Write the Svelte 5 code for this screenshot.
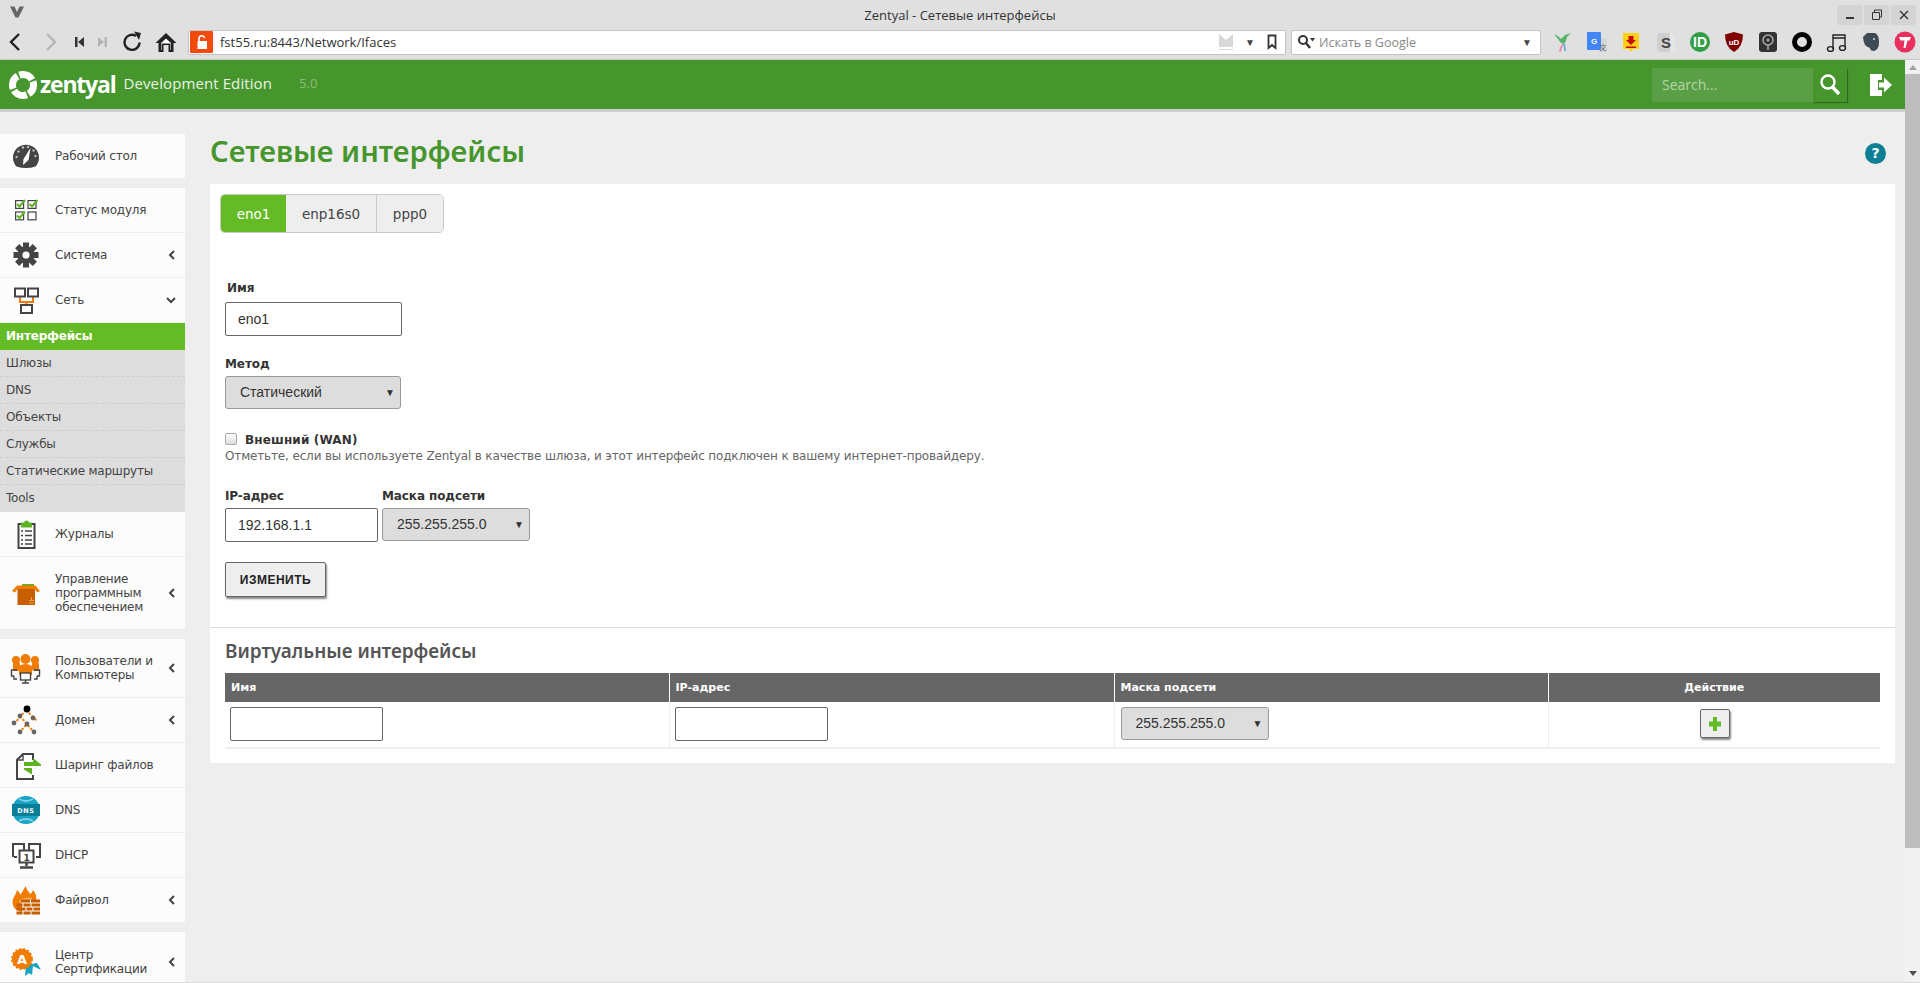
<script>
  const exts = ['bird', 'gt', 'dl', 's', 'id', 'ub', 'tor', 'ring', 'music', 'ever', 'pink'];

  const sub = ['Интерфейсы', 'Шлюзы', 'DNS', 'Объекты', 'Службы', 'Статические маршруты', 'Tools'];

  const groups = [
    [{ icon: 'dash', label: 'Рабочий стол' }],
    [
      { icon: 'status', label: 'Статус модуля' },
      { icon: 'gear', label: 'Система', arrow: 'left' },
      { icon: 'net', label: 'Сеть', arrow: 'down', children: sub },
      { icon: 'log', label: 'Журналы' },
      { icon: 'box', label: 'Управление программным обеспечением', arrow: 'left', tall: true }
    ],
    [
      { icon: 'users', label: 'Пользователи и Компьютеры', arrow: 'left', mid: true },
      { icon: 'domain', label: 'Домен', arrow: 'left' },
      { icon: 'share', label: 'Шаринг файлов' },
      { icon: 'dns', label: 'DNS' },
      { icon: 'dhcp', label: 'DHCP' },
      { icon: 'fire', label: 'Файрвол', arrow: 'left' }
    ],
    [{ icon: 'ca', label: 'Центр Сертификации', arrow: 'left', mid: true }]
  ];
</script>

{#snippet navIcon(name)}
  <svg class="nav-icon" viewBox="0 0 32 32" width="32" height="32">
    {#if name === 'dash'}
      <path d="M6.5 26.5 A13 13 0 1 1 25.5 26.5 Q16 29.5 6.5 26.5Z" fill="#444" />
      <path d="M20.5 8 L18.5 20 L13 25 L13.5 19Z" fill="#fff" />
      <g fill="#bbb"><circle cx="6.5" cy="17" r="1.2" /><circle cx="8.5" cy="11.5" r="1.2" /><circle cx="13" cy="7.5" r="1.2" /><circle cx="18" cy="7" r="1.2" /><circle cx="23.5" cy="10.5" r="1.2" /><circle cx="25.5" cy="16" r="1.2" /></g>
    {:else if name === 'status'}
      <g fill="none" stroke="#444" stroke-width="1.2">
        <rect x="5.6" y="6.6" width="8" height="7.8" /><rect x="18" y="6.6" width="8" height="7.8" />
        <rect x="5.6" y="18" width="8" height="7.8" /><rect x="18" y="18" width="8" height="7.8" />
      </g>
      <g fill="none" stroke="#5fb221" stroke-width="2">
        <path d="M7 10 L9.5 12.5 L15 6" /><path d="M19.5 10 L22 12.5 L27.5 6" /><path d="M7 21.5 L9.5 24 L15 17.5" />
      </g>
    {:else if name === 'gear'}
      <g fill="#444">
        <circle cx="16" cy="16" r="8.5" />
        <rect x="13" y="3.5" width="6" height="25" />
        <rect x="13" y="3.5" width="6" height="25" transform="rotate(45 16 16)" />
        <rect x="13" y="3.5" width="6" height="25" transform="rotate(90 16 16)" />
        <rect x="13" y="3.5" width="6" height="25" transform="rotate(135 16 16)" />
      </g>
      <circle cx="16" cy="16" r="3.6" fill="#fcfcfc" />
    {:else if name === 'net'}
      <path d="M10 13 V18 H23 V13 M16.5 18 V21" fill="none" stroke="#f07b05" stroke-width="2" />
      <g fill="#fff" stroke="#444" stroke-width="2">
        <rect x="5" y="4.5" width="10" height="8" /><rect x="18" y="4.5" width="10" height="8" /><rect x="11" y="21" width="11" height="8" />
      </g>
    {:else if name === 'log'}
      <path d="M8.5 6 H24.5 V30 H8.5Z" fill="none" stroke="#444" stroke-width="2" />
      <path d="M11 4.5 H14 A2.6 2.6 0 0 1 19 4.5 H22 V9.5 H11Z" fill="#5fb221" />
      <g stroke="#444" stroke-width="1.6">
        <path d="M11 13 h2 M15 13 h7 M11 17.5 h2 M15 17.5 h7 M11 22 h2 M15 22 h7 M11 26 h2 M15 26 h7" />
      </g>
    {:else if name === 'box'}
      <path d="M7.5 12 H25 V28 H7.5Z" fill="#c75e00" />
      <path d="M12 7 H24 V12 H12Z" fill="#5fb221" />
      <path d="M2 14 L7 8.5 H25.5 L30 14 L27 15.5 L25 12 H7.5 L5 15.5Z" fill="#f07b05" />
      <path d="M19 23.5 h5 M21.5 20 v3 M19 26 h5" stroke="#f0a050" stroke-width="1" />
    {:else if name === 'users'}
      <g fill="#f07b05">
        <circle cx="6" cy="8" r="4" /><rect x="3" y="10" width="7" height="9" rx="2" />
        <circle cx="25" cy="8" r="4" /><rect x="22" y="10" width="7" height="9" rx="2" />
        <circle cx="15.5" cy="7" r="5" /><path d="M9 14 Q15.5 10 22 14 V23 H9Z" />
      </g>
      <g fill="none" stroke="#444" stroke-width="1.4">
        <path d="M7 18 H1.5 V24 H4 M4 24 V27 H7" /><path d="M24 18 H29.5 V24 H27 M27 24 V27 H24" />
        <rect x="10.5" y="21" width="10" height="7" fill="#fff" /><path d="M15.5 28 V31 M12 31 H19" />
      </g>
    {:else if name === 'domain'}
      <g stroke="#f07b05" stroke-width="2" stroke-dasharray="2.5 1.5" fill="none">
        <path d="M16 6 L5 19 M16 6 L27 17 M10 12 L22 26 M16 21 L10 28" />
      </g>
      <circle cx="17" cy="5" r="3.4" fill="#000" />
      <g fill="#666">
        <circle cx="10" cy="12" r="2.4" /><circle cx="23" cy="14" r="2.4" /><circle cx="4" cy="19" r="2.4" />
        <circle cx="17" cy="20" r="2.4" /><circle cx="10" cy="28" r="2.4" /><circle cx="24" cy="28" r="2.4" />
      </g>
    {:else if name === 'share'}
      <path d="M23 11 V5 H13 L7 11 V30 H23 V26" fill="none" stroke="#444" stroke-width="2" />
      <path d="M7 11 H13 V5" fill="none" stroke="#444" stroke-width="1.4" />
      <path d="M14 13 H23 V9 L31 15.5 V17 H14Z" fill="#5fb221" />
      <path d="M31 19 H22 V25.5 L14 20.5 V19Z" fill="#5fb221" />
    {:else if name === 'dns'}
      <circle cx="16" cy="16" r="14" fill="#16a3c4" />
      <rect x="2" y="10" width="28" height="12" fill="#097e99" />
      <path d="M9 5 Q16 9 23 5 M9 27 Q16 23 23 27" stroke="#7fd0e2" stroke-width="2" fill="none" />
      <text x="16" y="19" class="dns-text">DNS</text>
    {:else if name === 'dhcp'}
      <g fill="#fff" stroke="#444" stroke-width="2">
        <path d="M3 18 V5 H14 V12 M19 12 V5 H30 V18 H26" />
        <rect x="9.5" y="11.5" width="14" height="12" />
      </g>
      <path d="M4 18 h3 M26 18 h3" stroke="#444" stroke-width="2" />
      <path d="M16.5 23.5 V27 M10 28.5 H23" stroke="#444" stroke-width="2.4" />
      <text x="16.5" y="21.5" class="dhcp-text">1</text>
    {:else if name === 'fire'}
      <path d="M3 21 C1 14 6 12 7 6 C9 8 10 9 10 11 C13 8 13 5 16 2 C16 6 19 7 20 10 C22 9 22 8 23 6 C26 10 27 13 26 16 H12 V28 C8 27 4 25 3 21Z" fill="#f07b05" />
      <path d="M9 17 C12 14 16 13 22 14 V16 H12 V22 Z" fill="#f9b26a" />
      <g fill="#c75e00">
        <rect x="11" y="15.5" width="9" height="3" /><rect x="21" y="15.5" width="9" height="3" />
        <rect x="6.5" y="19.5" width="6" height="3" /><rect x="13.5" y="19.5" width="7" height="3" /><rect x="21.5" y="19.5" width="8.5" height="3" />
        <rect x="6.5" y="23.5" width="9" height="3" /><rect x="16.5" y="23.5" width="6" height="3" /><rect x="23.5" y="23.5" width="6.5" height="3" />
        <rect x="6.5" y="27.5" width="6" height="3" /><rect x="13.5" y="27.5" width="7" height="3" /><rect x="21.5" y="27.5" width="8.5" height="3" />
      </g>
    {:else if name === 'ca'}
      <path d="M16 19 L15 30 L19 27 L22 29 L23 20 L31 24 L27 17Z" fill="#16a3c4" />
      <circle cx="12" cy="13" r="10" fill="#f07b05" stroke="#f07b05" stroke-width="2" stroke-dasharray="2 2" />
      <circle cx="12" cy="13" r="9.5" fill="#f07b05" />
      <text x="12" y="17.5" class="ca-text">A</text>
    {/if}
  </svg>
{/snippet}

{#snippet ext(name)}
  <svg class="ext" viewBox="0 0 24 24" width="24" height="24">
    {#if name === 'bird'}
      <path d="M3 4 Q8 6 10 9 L14 5 L20 3 L16 7 Q15 12 13 14 L10 13 Q7 9 3 4Z" fill="#58b36b" />
      <path d="M12 14 Q9 18 9 22" stroke="#e58aa8" stroke-width="1.6" fill="none" />
      <path d="M13 14 Q14 17 14 21" stroke="#5aa9dd" stroke-width="1.6" fill="none" />
    {:else if name === 'gt'}
      <path d="M11 8 H22 V22 H14Z" fill="#d5d5d5" />
      <rect x="2" y="2" width="14" height="18" rx="1" fill="#4285f4" />
      <text x="9" y="14" class="gt-text">G</text>
      <text x="18" y="20" class="gt-text2">文</text>
    {:else if name === 'dl'}
      <path d="M4 3 H20 V19 H14 L12 22 L10 19 H4Z" fill="#fbd015" />
      <path d="M9.5 6 H14.5 V10 H17 L12 15 L7 10 H9.5Z M7 16.5 H17 V18 H7Z" fill="#c60c0c" />
    {:else if name === 's'}
      <rect x="3" y="3" width="18" height="19" rx="4" fill="#cfcfcf" />
      <path d="M16 3 H17 Q21 3 21 7 V18 Q21 22 17 22 H16Z" fill="#e6e6e6" />
      <text x="12" y="18" class="s-text">S</text>
    {:else if name === 'id'}
      <circle cx="12" cy="12" r="10" fill="#2f9e44" />
      <text x="12" y="17" class="id-text">ID</text>
    {:else if name === 'ub'}
      <path d="M12 2 L21 4.5 Q21 17 12 22 Q3 17 3 4.5Z" fill="#800000" />
      <text x="12" y="15" class="ub-text">uD</text>
    {:else if name === 'tor'}
      <rect x="3" y="2" width="18" height="20" rx="3" fill="#333" />
      <circle cx="12" cy="10" r="5" fill="none" stroke="#aaa" stroke-width="1.5" />
      <path d="M12 15 V20" stroke="#aaa" stroke-width="1.5" /><circle cx="12" cy="10" r="1.5" fill="#aaa" />
    {:else if name === 'ring'}
      <circle cx="12" cy="12" r="7.5" fill="none" stroke="#000" stroke-width="5" />
    {:else if name === 'music'}
      <path d="M8 19 V5 H20 V17 M8 8 H20" fill="none" stroke="#222" stroke-width="1.4" />
      <ellipse cx="5.5" cy="19" rx="3" ry="2.4" fill="none" stroke="#222" stroke-width="1.4" />
      <ellipse cx="17.5" cy="18" rx="3" ry="2.4" fill="none" stroke="#222" stroke-width="1.4" />
    {:else if name === 'ever'}
      <path d="M8 3 H16 Q20 5 20 12 Q20 20 15 21 Q11 21 11 18 Q8 17 6 15 Q4 10 4 7Z" fill="#3c4b55" />
      <circle cx="15" cy="9" r="1" fill="#ddd" />
    {:else if name === 'pink'}
      <circle cx="12" cy="12" r="10.5" fill="#e8305f" />
      <path d="M6 7 H18 L16.5 10.5 H14.5 L12.5 18 H10.5 L11.5 10.5 H7.5Z" fill="#fff" />
    {/if}
  </svg>
{/snippet}

<div class="window">
  <div class="titlebar">
    <svg class="vivaldi" viewBox="0 0 16 14" width="16" height="14">
      <path d="M1 1.5 H5.5 L8 7 L10.5 1.5 H15 L9.5 12.5 H6.5Z" fill="#666" />
    </svg>
    <span class="title">Zentyal - Сетевые интерфейсы</span>
    <div class="winbtns">
      <span class="winbtn"><i class="min"></i></span>
      <span class="winbtn">
        <svg viewBox="0 0 12 12" width="12" height="12"><path d="M3.5 3 V1 H10.5 V8 H8.5 M1.5 3.5 H8.5 V10.5 H1.5Z" fill="none" stroke="#333" /></svg>
      </span>
      <span class="winbtn">
        <svg viewBox="0 0 12 12" width="12" height="12"><path d="M2 2 L10 10 M10 2 L2 10" stroke="#333" stroke-width="1.4" /></svg>
      </span>
    </div>
  </div>

  <div class="toolbar">
    <div class="navbtns">
      <svg viewBox="0 0 24 24" width="24" height="24"><path d="M15 4 L7 12 L15 20" fill="none" stroke="#222" stroke-width="2.4" /></svg>
      <svg viewBox="0 0 24 24" width="24" height="24"><path d="M9 4 L17 12 L9 20" fill="none" stroke="#b5b5b5" stroke-width="2.4" /></svg>
      <svg class="small" viewBox="0 0 12 14" width="12" height="14"><path d="M2 2 H4.5 V12 H2Z M11 2 V12 L5 7Z" fill="#333" /></svg>
      <svg class="small" viewBox="0 0 12 14" width="12" height="14"><path d="M10 2 H7.5 V12 H10Z M1 2 V12 L7 7Z" fill="#b5b5b5" /></svg>
      <svg viewBox="0 0 24 24" width="24" height="24"><path d="M19.5 12.5 A7.5 7.5 0 1 1 16 6" fill="none" stroke="#222" stroke-width="2.4" /><path d="M14 1.5 L21 3 L19 10Z" fill="#222" /></svg>
      <svg viewBox="0 0 24 24" width="24" height="24"><path d="M1.5 13 L12 3 L22.5 13 H19.5 V22 H14.5 V15 H9.5 V22 H4.5 V13Z" fill="#222" /><path d="M7 13 L12 8.5 L17 13 V20 H16.5 V13.5 H7.5 V20 H7Z" fill="#fff" /></svg>
    </div>
    <div class="urlbar">
      <span class="lock">
        <svg viewBox="0 0 14 16" width="14" height="16"><path d="M2.5 7 H12 V15 H2.5Z" fill="#fff" /><path d="M4 7 V4 A2.8 2.8 0 0 1 9.5 4" fill="none" stroke="#fff" stroke-width="1.6" /></svg>
      </span>
      <span class="url">fst55.ru:8443/Network/Ifaces</span>
      <svg class="gm" viewBox="0 0 14 18" width="14" height="18"><path d="M0 1 L7 7 L14 1 V14 H0Z" fill="#d8d8d8" /><path d="M0 16.5 H14" stroke="#d8d8d8" /></svg>
      <span class="drop">▼</span>
      <svg class="bm" viewBox="0 0 10 16" width="10" height="16"><path d="M1.5 1.5 H8.5 V14 L5 11 L1.5 14Z" fill="none" stroke="#333" stroke-width="1.8" /></svg>
    </div>
    <div class="searchbar">
      <svg viewBox="0 0 18 16" width="18" height="16"><circle cx="6" cy="6" r="4" fill="none" stroke="#333" stroke-width="2" /><path d="M9 9 L13 14" stroke="#333" stroke-width="2.4" /><path d="M13 4 H18 L15.5 7.5Z" fill="#333" /></svg>
      <span class="ph">Искать в Google</span>
      <span class="drop">▼</span>
    </div>
    <div class="exts">
      {#each exts as e}
        {@render ext(e)}
      {/each}
    </div>
  </div>

  <div class="viewport">
    <div class="page">
      <header class="topbar">
        <div class="brand">
          <svg class="ring" viewBox="0 0 28 30" width="28" height="30">
            <circle cx="14" cy="15" r="10.5" fill="none" stroke="#fff" stroke-width="7" stroke-dasharray="14.5 2" stroke-dashoffset="4" />
          </svg>
          <span class="logo">zentyal</span>
          <span class="edition">Development Edition</span>
          <span class="version">5.0</span>
        </div>
        <div class="top-right">
          <div class="top-search">
            <span class="top-ph">Search...</span>
            <button class="top-go" aria-label="Search">
              <svg viewBox="0 0 22 24" width="22" height="24"><circle cx="9" cy="9" r="6.5" fill="none" stroke="#fff" stroke-width="2.4" /><path d="M13.5 14 L20 21" stroke="#fff" stroke-width="3.4" /></svg>
            </button>
          </div>
          <svg class="logout" viewBox="0 0 22 24" width="22" height="24">
            <path d="M0 1 H12 V7 H8 V17 H12 V23 H0Z" fill="#fff" /><path d="M3.5 4 V20 H5 V4Z" fill="#fff" />
            <path d="M9 9.5 H14 V4.5 L22 12 L14 19.5 V14.5 H9Z" fill="#fff" />
          </svg>
        </div>
      </header>

      <div class="body">
        <nav class="sidebar">
          {#each groups as group}
            <ul class="group">
              {#each group as item}
                <li class="item" class:tall={item.tall} class:mid={item.mid}>
                  <span class="icon-cell">{@render navIcon(item.icon)}</span>
                  <span class="label">{item.label}</span>
                  {#if item.arrow === 'left'}
                    <svg class="arrow" viewBox="0 0 8 10" width="8" height="10"><path d="M6 1 L2 5 L6 9" fill="none" stroke="#444" stroke-width="2" /></svg>
                  {:else if item.arrow === 'down'}
                    <svg class="arrow" viewBox="0 0 10 8" width="10" height="8"><path d="M1 2 L5 6 L9 2" fill="none" stroke="#444" stroke-width="2" /></svg>
                  {/if}
                </li>
                {#if item.children}
                  <ul class="sub">
                    {#each item.children as child, i}
                      <li class:active={i === 0}>{child}</li>
                    {/each}
                  </ul>
                {/if}
              {/each}
            </ul>
          {/each}
        </nav>

        <main class="main">
          <div class="heading">
            <h1>Сетевые интерфейсы</h1>
            <span class="help">?</span>
          </div>

          <section class="panel">
            <div class="tabs">
              <span class="tab on">eno1</span>
              <span class="tab">enp16s0</span>
              <span class="tab">ppp0</span>
            </div>

            <form class="form">
              <label class="lbl name-lbl" for="iface">Имя</label>
              <input id="iface" class="field wide" value="eno1" />

              <label class="lbl method-lbl" for="method">Метод</label>
              <div id="method" class="select wide-sel"><span>Статический</span><b>▼</b></div>

              <div class="check-row">
                <span class="check"></span>
                <strong>Внешний (WAN)</strong>
              </div>
              <p class="hint">Отметьте, если вы используете Zentyal в качестве шлюза, и этот интерфейс подключен к вашему интернет-провайдеру.</p>

              <div class="ip-row">
                <div class="ip-col">
                  <span class="lbl">IP-адрес</span>
                  <input class="field ip" value="192.168.1.1" />
                </div>
                <div class="mask-col">
                  <span class="lbl">Маска подсети</span>
                  <div class="select mask"><span>255.255.255.0</span><b>▼</b></div>
                </div>
              </div>

              <button type="button" class="change">ИЗМЕНИТЬ</button>
            </form>

            <div class="virtual">
              <h2>Виртуальные интерфейсы</h2>
              <table>
                <thead>
                  <tr>
                    <th class="c1">Имя</th>
                    <th class="c2">IP-адрес</th>
                    <th class="c3">Маска подсети</th>
                    <th class="c4">Действие</th>
                  </tr>
                </thead>
                <tbody>
                  <tr>
                    <td><input class="field ip" /></td>
                    <td><input class="field ip" /></td>
                    <td class="mask-cell"><div class="select mask"><span>255.255.255.0</span><b>▼</b></div></td>
                    <td class="act">
                      <button type="button" class="add" aria-label="Добавить">
                        <svg viewBox="0 0 14 16" width="14" height="16"><path d="M5 1 H9 V5.5 H13 V10.5 H9 V15 H5 V10.5 H1 V5.5 H5Z" fill="#65bb25" /></svg>
                      </button>
                    </td>
                  </tr>
                </tbody>
              </table>
            </div>
          </section>
        </main>
      </div>
    </div>

    <div class="scrollbar">
      <span class="sb-up"></span>
      <span class="sb-thumb"></span>
      <span class="sb-down"></span>
    </div>
  </div>
  <div class="bottom-line"></div>
</div>

<style>
  :global(body) {
    margin: 0;
    overflow: hidden;
    background: #eee;
  }

  * {
    box-sizing: border-box;
  }

  .window {
    width: 1920px;
    height: 983px;
    display: flex;
    flex-direction: column;
    overflow: hidden;
    font-family: "DejaVu Sans", sans-serif;
    color: #444;
  }

  /* browser chrome */
  .titlebar {
    height: 25px;
    flex: none;
    background: #e0e0e0;
    display: flex;
    align-items: center;
    justify-content: center;
    position: relative;
  }

  .vivaldi {
    position: absolute;
    left: 9px;
    top: 5px;
  }

  .title {
    font: 13px "Open Sans", sans-serif;
    color: #333;
    margin-top: 4px;
  }

  .winbtns {
    position: absolute;
    right: 4px;
    top: 5px;
    display: flex;
    gap: 2px;
  }

  .winbtn {
    width: 25px;
    height: 20px;
    background: #d4d4d4;
    border-radius: 2px;
    display: flex;
    align-items: center;
    justify-content: center;
  }

  .min {
    width: 8px;
    height: 2px;
    background: #333;
    margin-top: 6px;
  }

  .toolbar {
    height: 35px;
    flex: none;
    background: #e0e0e0;
    border-bottom: 1px solid #c8c8c8;
    display: flex;
    align-items: center;
    padding-left: 4px;
  }

  .navbtns {
    display: flex;
    align-items: center;
    width: 184px;
    flex: none;
    gap: 10px;
  }

  .navbtns .small {
    margin: 0 1px;
  }

  .urlbar,
  .searchbar {
    height: 25px;
    background: #fff;
    border: 1px solid #c4c4c4;
    border-radius: 2px;
    display: flex;
    align-items: center;
    font: 12.5px "Open Sans", sans-serif;
  }

  .urlbar {
    width: 1098px;
    flex: none;
    padding: 0 8px 0 1px;
    margin-right: 5px;
  }

  .lock {
    width: 23px;
    height: 22px;
    background: #f04b0c;
    display: flex;
    align-items: center;
    justify-content: center;
    border-radius: 1px;
    margin-right: 7px;
  }

  .url {
    flex: 1;
    color: #333;
    font-size: 13px;
  }

  .gm {
    margin-right: 12px;
  }

  .drop {
    font-size: 10px;
    color: #444;
  }

  .bm {
    margin-left: 12px;
  }

  .searchbar {
    width: 250px;
    flex: none;
    padding: 0 8px 0 5px;
    gap: 4px;
  }

  .ph {
    flex: 1;
    color: #888;
  }

  .exts {
    display: flex;
    align-items: center;
    gap: 10.2px;
    margin-left: 10px;
  }

  .gt-text {
    font: bold 8px "Liberation Sans", sans-serif;
    fill: #fff;
    text-anchor: middle;
  }

  .gt-text2 {
    font: 7px "Noto Sans CJK SC", sans-serif;
    fill: #666;
    text-anchor: middle;
  }

  .s-text {
    font: bold 15px "Liberation Sans", sans-serif;
    fill: #444;
    text-anchor: middle;
  }

  .id-text {
    font: bold 14px "Liberation Sans", sans-serif;
    fill: #fff;
    text-anchor: middle;
  }

  .ub-text {
    font: bold 8px "Liberation Sans", sans-serif;
    fill: #fff;
    text-anchor: middle;
  }

  /* page */
  .viewport {
    flex: 1;
    display: flex;
    min-height: 0;
  }

  .page {
    flex: 1;
    min-width: 0;
    display: flex;
    flex-direction: column;
    background: #eee;
    overflow: hidden;
  }

  .topbar {
    height: 52px;
    flex: none;
    background: #46962d;
    border-bottom: 3px solid #cfcfcf;
    display: flex;
    align-items: center;
    justify-content: space-between;
    padding: 0 13px 0 9px;
  }

  .brand {
    display: flex;
    align-items: center;
  }

  .ring {
    margin-right: 3px;
  }

  .logo {
    font: 700 23px "Open Sans", sans-serif;
    letter-spacing: -1.2px;
    color: #fff;
    margin-right: 8px;
    margin-bottom: 2px;
  }

  .edition {
    font: 15px "Open Sans", sans-serif;
    color: #eaf3e6;
    letter-spacing: .1px;
    margin-bottom: 3px;
  }

  .version {
    font: 13px "Open Sans", sans-serif;
    color: #8dbd7a;
    margin-left: 27px;
    margin-bottom: 3px;
  }

  .top-right {
    display: flex;
    align-items: center;
  }

  .top-search {
    width: 195px;
    height: 34px;
    background: #5a9f45;
    display: flex;
    align-items: center;
    justify-content: space-between;
    padding-left: 10px;
    margin-right: 23px;
  }

  .top-ph {
    font: 14px "Open Sans", sans-serif;
    color: #b4d6a8;
    margin-bottom: 1px;
  }

  .top-go {
    width: 34px;
    height: 34px;
    background: #46962d;
    border: 0;
    padding: 0;
    box-shadow: 1px 1px 1px #2f6a1c;
    display: flex;
    align-items: center;
    justify-content: center;
  }

  .body {
    flex: 1;
    min-height: 0;
    display: flex;
  }

  /* sidebar */
  .sidebar {
    width: 185px;
    flex: none;
    padding-top: 22px;
    display: flex;
    flex-direction: column;
    gap: 10px;
  }

  .group {
    list-style: none;
    margin: 0;
    padding: 0;
    background: #fcfcfc;
  }

  .item {
    height: 45px;
    display: flex;
    align-items: center;
    border-bottom: 1px solid #eee;
    font-size: 12px;
    line-height: 14px;
    letter-spacing: -.2px;
    color: #444;
    position: relative;
  }

  .group > .item:last-child {
    border-bottom: 0;
    height: 44px;
  }

  .item.tall,
  .group > .item.tall:last-child {
    height: 72px;
  }

  .item.mid,
  .group > .item.mid:last-child {
    height: 59px;
  }

  .icon-cell {
    width: 55px;
    flex: none;
    display: flex;
    justify-content: center;
    padding-right: 3px;
  }

  .label {
    width: 105px;
  }

  .arrow {
    position: absolute;
    right: 9px;
    top: 50%;
    transform: translateY(-50%);
  }

  .sub {
    list-style: none;
    margin: 0;
    padding: 0;
    background: #ddd;
  }

  .sub li {
    height: 27px;
    line-height: 26px;
    padding-left: 6px;
    font-size: 12px;
    letter-spacing: -.2px;
    color: #444;
    border-bottom: 1px dashed #ccc;
  }

  .sub li:last-child {
    border-bottom: 0;
  }

  .sub li.active {
    background: #65bb25;
    color: #fff;
    font-weight: bold;
    border-bottom: 0;
  }

  .dns-text {
    font: bold 6.5px "DejaVu Sans", sans-serif;
    letter-spacing: .6px;
    fill: #fff;
    text-anchor: middle;
  }

  .dhcp-text {
    font: bold 9px "DejaVu Sans", sans-serif;
    fill: #444;
    text-anchor: middle;
  }

  .ca-text {
    font: bold 13px "DejaVu Sans", sans-serif;
    fill: #fff;
    text-anchor: middle;
  }

  /* main column */
  .main {
    flex: 1;
    min-width: 0;
    padding: 0 10px 0 25px;
  }

  .heading {
    height: 72px;
    display: flex;
    align-items: center;
    justify-content: space-between;
    padding-top: 5px;
    padding-right: 9px;
  }

  h1 {
    margin: 0;
    font: 600 29.2px "Noto Sans", sans-serif;
    color: #46962d;
  }

  .help {
    width: 21px;
    height: 21px;
    border-radius: 50%;
    background: #0d7f94;
    color: #fff;
    font: bold 14px/21px "DejaVu Sans", sans-serif;
    text-align: center;
    margin-top: 5px;
  }

  .panel {
    background: #fff;
    padding-top: 10px;
    height: 579px;
  }

  .tabs {
    display: flex;
    width: max-content;
    margin-left: 10px;
    border: 1px solid #c8c8c8;
    border-radius: 5px;
    overflow: hidden;
    height: 39px;
    font-size: 13.5px;
  }

  .tab {
    display: flex;
    align-items: center;
    justify-content: center;
    background: #eee;
    width: 91px;
    border-right: 1px solid #ccc;
    color: #444;
  }

  .tab.on {
    width: 65px;
    background: #65bb25;
    color: #fff;
    border-right: 0;
  }

  .tab:last-child {
    width: 66px;
    border-right: 0;
  }

  .form {
    padding: 48px 0 0 15px;
    display: flex;
    flex-direction: column;
    align-items: flex-start;
  }

  .lbl {
    font-size: 12px;
    font-weight: bold;
    color: #333;
    line-height: 14px;
    letter-spacing: -.1px;
  }

  .name-lbl {
    margin-left: 2px;
    margin-bottom: 7px;
  }

  .method-lbl {
    margin-top: 21px;
    margin-bottom: 5px;
  }

  .field {
    display: block;
    height: 34px;
    border: 1px solid #666;
    border-radius: 2px;
    background: #fff;
    padding: 0 12px;
    font: 14px "Liberation Sans", sans-serif;
    color: #333;
    outline: 0;
  }

  .wide {
    width: 177px;
  }

  .ip {
    width: 153px;
  }

  .select {
    height: 33px;
    background: #ddd;
    border: 1px solid #999;
    border-radius: 3px;
    display: flex;
    align-items: center;
    justify-content: space-between;
    padding: 0 5px 1px 14px;
    font: 14px "Liberation Sans", sans-serif;
    color: #333;
  }

  .select b {
    font-size: 10px;
    color: #333;
  }

  .wide-sel {
    width: 176px;
  }

  .mask {
    width: 148px;
  }

  .check-row {
    display: flex;
    align-items: center;
    margin-top: 24px;
    font-size: 12px;
    line-height: 14px;
    letter-spacing: .15px;
    color: #333;
  }

  .check {
    width: 12px;
    height: 12px;
    background: linear-gradient(#fff, #ddd);
    border: 1px solid #aaa;
    border-radius: 2px;
    margin-right: 8px;
    margin-top: -2px;
  }

  .hint {
    margin: 2px 0 0;
    font-size: 12px;
    line-height: 14px;
    letter-spacing: -.15px;
    color: #666;
  }

  .ip-row {
    display: flex;
    gap: 4px;
    margin-top: 26px;
  }

  .ip-col .lbl,
  .mask-col .lbl {
    display: block;
    margin-bottom: 5px;
  }

  .mask-col .select {
    margin-top: 1px;
  }

  .change {
    margin-top: 20px;
    width: 101px;
    height: 35px;
    background: #eee;
    border: 1px solid #666;
    border-radius: 2px;
    box-shadow: 1px 2px 2px #888;
    font: bold 12px "Liberation Sans", sans-serif;
    letter-spacing: .5px;
    color: #222;
    padding: 0;
  }

  .virtual {
    margin-top: 30px;
    border-top: 1px solid #ddd;
    padding: 0 15px;
  }

  h2 {
    margin: 0;
    height: 45px;
    display: flex;
    align-items: center;
    font: 600 18.9px "Noto Sans", sans-serif;
    color: #555;
  }

  table {
    width: 100%;
    border-collapse: collapse;
    table-layout: fixed;
  }

  th {
    height: 29px;
    background: #666;
    color: #fff;
    font-size: 11px;
    text-align: left;
    padding: 0 6px;
    border-right: 1px solid #fff;
  }

  th:last-child {
    border-right: 0;
    text-align: center;
  }

  .c1 {
    width: 444px;
  }

  .c2 {
    width: 445px;
  }

  .c3 {
    width: 434px;
  }

  td {
    height: 46px;
    padding: 0 5px 2px;
    border-right: 1px solid #eee;
    border-bottom: 2px solid #eee;
  }

  td:last-child {
    border-right: 0;
  }

  .mask-cell {
    padding-left: 6px;
  }

  .act {
    text-align: center;
    padding-left: 7px;
  }

  .add {
    width: 30px;
    height: 29px;
    background: #eee;
    border: 1px solid #666;
    border-radius: 2px;
    box-shadow: 1px 2px 2px #888;
    padding: 0;
    vertical-align: middle;
  }

  .add svg {
    display: block;
    margin: 0 auto;
  }

  /* scrollbar */
  .scrollbar {
    width: 15px;
    flex: none;
    background: #f1f1f1;
    display: flex;
    flex-direction: column;
    align-items: center;
    position: relative;
  }

  .sb-thumb {
    display: block;
    width: 100%;
    height: 774px;
    margin-top: 14px;
    background: #bdbdbd;
  }

  .sb-up,
  .sb-down {
    position: absolute;
    width: 0;
    height: 0;
    border-left: 4px solid transparent;
    border-right: 4px solid transparent;
  }

  .sb-up {
    top: 5px;
    border-bottom: 5px solid #a0a0a0;
  }

  .sb-down {
    bottom: 6px;
    border-top: 5px solid #505050;
  }

  .bottom-line {
    height: 1px;
    flex: none;
    background: #ddd;
  }
</style>
